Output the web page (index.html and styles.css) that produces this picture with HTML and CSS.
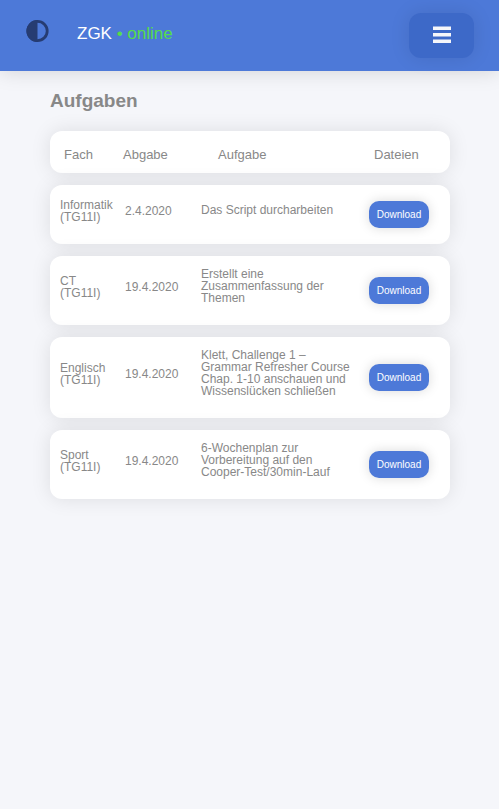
FILE: index.html
```html
<!DOCTYPE html>
<html lang="de">
<head>
<meta charset="utf-8">
<meta name="viewport" content="width=device-width, initial-scale=1">
<title>ZGK • online</title>
<link rel="stylesheet" href="styles.css">
</head>
<body>
<header class="topbar">
  <button class="theme" type="button" aria-label="Farbschema wechseln">
    <svg viewBox="0 0 24 24" aria-hidden="true"><circle cx="12.500" cy="12" r="9.700" fill="none" stroke="currentColor" stroke-width="2.800"/><path d="M12.500 1a11 11 0 0 0 0 22z" fill="currentColor"/></svg>
  </button>
  <a class="brand" href="#">ZGK <span class="status">• online</span></a>
  <button class="menu" type="button" aria-label="Menü">
    <svg viewBox="0 0 18 18" aria-hidden="true"><path d="M0 .5h18v3.500H0zM0 7h18v3.500H0zM0 13.500h18v3.500H0z" fill="currentColor"/></svg>
  </button>
</header>
<main class="content">
  <h1>Aufgaben</h1>
  <table class="tasks">
    <thead>
      <tr><th>Fach</th><th>Abgabe</th><th>Aufgabe</th><th>Dateien</th></tr>
    </thead>
    <tbody>
      <tr><td>Informatik (TG11I)</td><td>2.4.2020</td><td class="task">Das Script durcharbeiten</td><td class="files"><button class="download" type="button">Download</button></td></tr>
      <tr><td>CT (TG11I)</td><td>19.4.2020</td><td class="task">Erstellt eine Zusammenfassung der Themen</td><td class="files"><button class="download" type="button">Download</button></td></tr>
      <tr><td>Englisch (TG11I)</td><td>19.4.2020</td><td class="task">Klett, Challenge 1 – Grammar Refresher Course Chap. 1-10 anschauen und Wissenslücken schließen</td><td class="files"><button class="download" type="button">Download</button></td></tr>
      <tr><td>Sport (TG11I)</td><td>19.4.2020</td><td class="task">6-Wochenplan zur Vorbereitung auf den Cooper-Test/30min-Lauf</td><td class="files"><button class="download" type="button">Download</button></td></tr>
    </tbody>
  </table>
</main>
</body>
</html>
```
FILE: styles.css
```css
* {
  box-sizing: border-box;
}

body {
  margin: 0;
  background: #f5f6fa;
  color: #888;
  font-family: "Liberation Sans", Arial, sans-serif;
  font-size: 12px;
  line-height: 12px;
}

button {
  border: 0;
  font-family: inherit;
  cursor: pointer;
}

.topbar {
  display: flex;
  align-items: center;
  padding: 13px 25px;
  background: #4d79d8;
  box-shadow: 0 0 20px rgba(0, 0, 0, 0.15);
}

.theme {
  padding: 0;
  margin-bottom: 10px;
  background: none;
  color: #263c72;
}

.theme svg {
  display: block;
  width: 24px;
  height: 24px;
}

.brand {
  margin: 0 auto 4px 28px;
  color: #fff;
  font-size: 17px;
  line-height: 20px;
  text-decoration: none;
}

.status {
  color: #55dc4b;
}

.menu {
  display: grid;
  place-items: center;
  width: 65px;
  height: 45px;
  padding: 0 0 2px;
  border-radius: 12px;
  background: #3d69c8;
  color: #f5f6fa;
  box-shadow: 0 0 20px rgba(0, 0, 0, 0.1);
}

.menu svg {
  width: 18px;
  height: 18px;
}

.content {
  padding: 18px 49px 18px 50px;
}

h1 {
  margin: 0 0 18px;
  font-size: 19px;
  line-height: 24px;
}

.tasks,
tbody {
  display: grid;
  gap: 12px;
}

tr {
  display: grid;
  grid-template-columns: 65px 76px 1fr 81px;
  align-items: center;
  padding-left: 10px;
  border-radius: 12px;
  background: #fff;
  box-shadow: 0 0 20px rgba(0, 0, 0, 0.1);
}

thead tr {
  grid-template-columns: 59px 95px 1fr 76px;
  padding-left: 14px;
}

th {
  padding: 16px 0 10px;
  font-size: 13px;
  font-weight: normal;
  line-height: 16px;
  text-align: left;
}

td {
  padding: 13px 10px 20px 0;
}

.task {
  padding: 12px 16px 21px 0;
}

.files {
  padding: 16px 0;
}

.download {
  display: block;
  width: 60px;
  height: 27px;
  padding: 0;
  border-radius: 10px;
  background: #4d79d8;
  color: #fff;
  font-size: 10px;
  box-shadow: 0 0 12px rgba(0, 0, 0, 0.15);
}
```
